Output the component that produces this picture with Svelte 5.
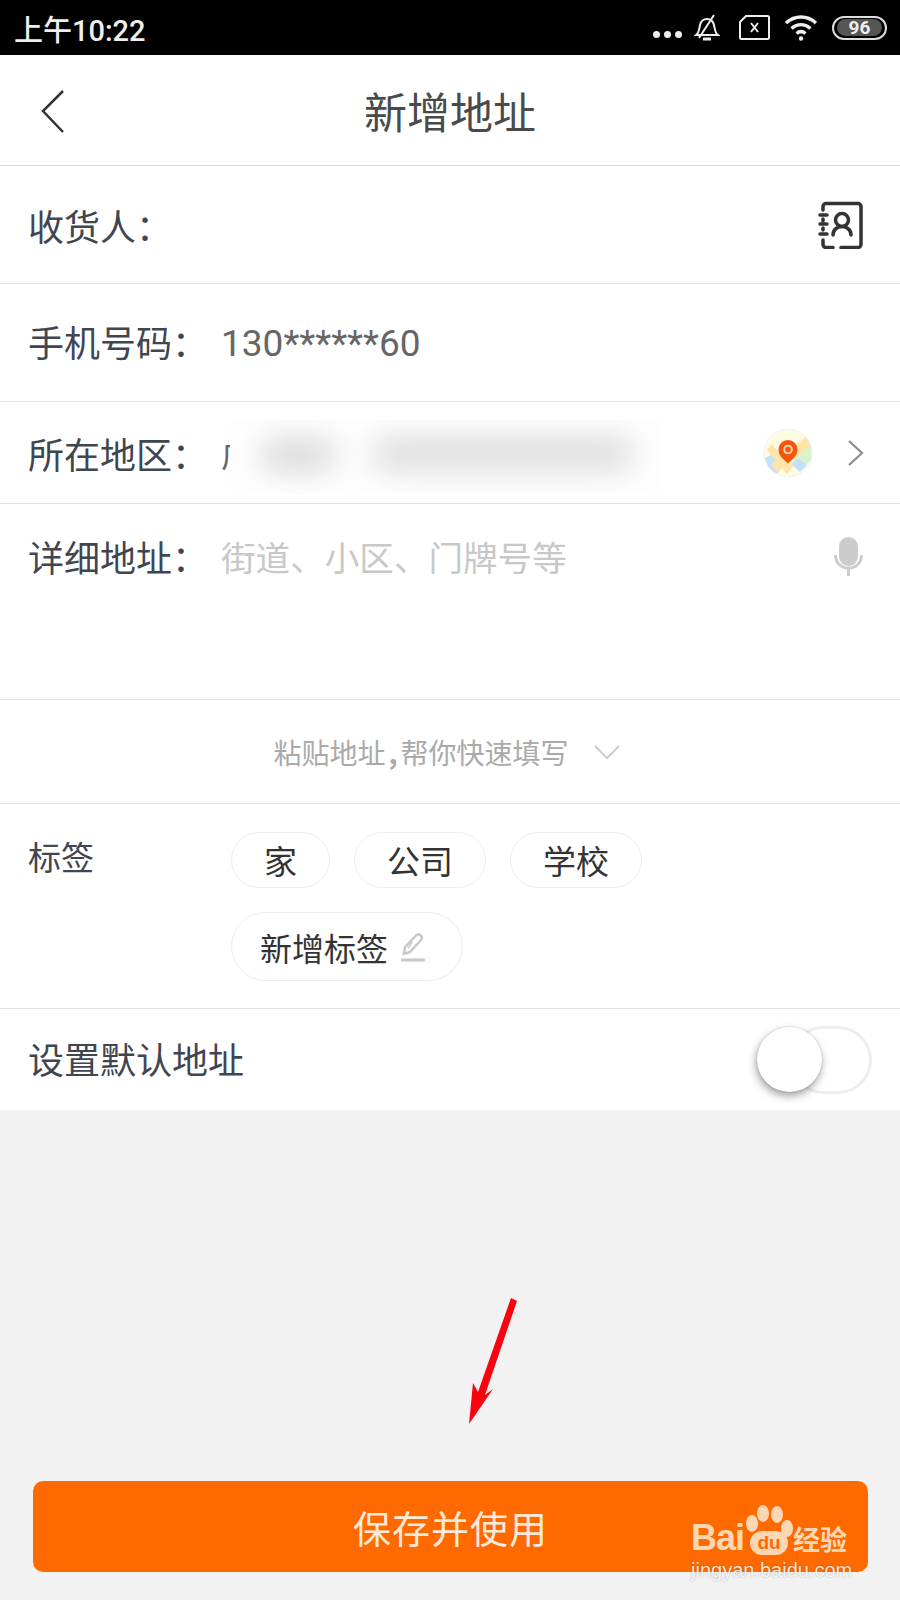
<script>
  let tags = ["家", "公司", "学校"];
</script>

<div class="page">
  <div class="status">
    <span class="time">上午10:22</span>
    <div class="status-icons">
      <span class="dots"><i></i><i></i><i></i></span>
      <svg width="26" height="28" viewBox="0 0 26 28" fill="none" stroke="#eee" stroke-width="2">
        <path d="M2 21c3-2 3-5 4-10 1-4 3-6 7-6s6 2 7 6c1 5 1 8 4 10z" />
        <path d="M9 25h8" stroke-width="3" />
        <path d="M5 24L20 1" />
      </svg>
      <svg class="sim" width="31" height="25" viewBox="0 0 31 25" fill="none" stroke="#eee" stroke-width="2">
        <path d="M7 1h21.500a1.500 1.500 0 0 1 1.500 1.500v20a1.500 1.500 0 0 1-1.500 1.500H2.500a1.500 1.500 0 0 1-1.500-1.500V7z" />
        <path d="M12 8l7 9M19 8l-7 9" />
      </svg>
      <svg width="34" height="26" viewBox="0 0 34 26" fill="none" stroke="#eee" stroke-width="3.500">
        <path d="M2 8c9-8 21-8 30 0" />
        <path d="M7.500 13.500c6-5 13-5 19 0" />
        <path d="M12.500 18.500c3-2.500 6-2.500 9 0" />
        <circle cx="17" cy="23.500" r="2.200" fill="#eee" stroke="none" />
      </svg>
      <span class="battery"><b>96</b></span>
    </div>
  </div>

  <header class="topbar">
    <svg class="back" width="26" height="44" viewBox="0 0 26 44" fill="none" stroke="#333" stroke-width="2.500">
      <path d="M23 2L3 22l20 21" />
    </svg>
    <h1>新增地址</h1>
  </header>

  <div class="row row-name">
    <span class="label">收货人：</span>
    <svg class="book" width="46" height="48" viewBox="0 0 46 48" fill="none" stroke="#333" stroke-width="3.500" stroke-linecap="round" stroke-linejoin="round">
      <path d="M5 9V5.500a3 3 0 0 1 3-3h32a3 3 0 0 1 3 3v38a3 3 0 0 1-3 3H23" />
      <path d="M15 46.500H8a3 3 0 0 1-3-3V39" />
      <path d="M5 18v2M5 27v2" />
      <path d="M2 14h7M2 23h7M2 33h7" />
      <circle cx="24" cy="19" r="6.500" />
      <path d="M15 34c0-5 4-8.500 9-8.500s9 3.500 9 8.500" />
    </svg>
  </div>

  <div class="row row-phone">
    <span class="label up">手机号码：</span>
    <span class="phone">130******60</span>
  </div>

  <div class="row row-area">
    <span class="label">所在地区：</span>
    <span class="area-text">广</span>
    <div class="blur"><span class="blob b1"></span><span class="blob b2"></span></div>
    <div class="right">
      <svg class="map" width="50" height="50" viewBox="0 0 50 50">
        <defs><clipPath id="mapclip"><circle cx="25" cy="25" r="24" /></clipPath></defs>
        <g clip-path="url(#mapclip)">
          <rect width="50" height="50" fill="#fefbe4" />
          <path d="M30 28L50 12v20L38 40z" fill="#d8f3cd" />
          <path d="M0 0h14L0 16z" fill="#e4f5da" />
          <path d="M0 31l12-6 10 10-11 15H0z" fill="#c4e0f6" />
          <path d="M28 36l7-6 9 7-7 7z" fill="#c4e0f6" />
          <path d="M4 22L8 16 30 38l-6 8zM8 36l36-28 6 8-36 28z" fill="#fde4a9" />
        </g>
        <circle cx="25" cy="25" r="24" fill="none" stroke="#f4f4ea" stroke-width="1" />
        <path d="M25 35.500c-3-3-9.500-7-9.500-14a9.500 9.500 0 0 1 19 0c0 7-6.500 11-9.500 14z" fill="#f4570c" />
        <circle cx="25" cy="21.500" r="3.800" fill="none" stroke="#fbd0b0" stroke-width="2" />
      </svg>
      <svg class="chev" width="18" height="28" viewBox="0 0 18 28" fill="none" stroke="#8c8c8c" stroke-width="2.200">
        <path d="M2 2l13 12L2 26" />
      </svg>
    </div>
  </div>

  <div class="row row-detail">
    <span class="label">详细地址：</span>
    <span class="placeholder">街道、小区、门牌号等</span>
    <svg class="mic" width="29" height="39" viewBox="0 0 29 39" fill="#ccc">
      <rect x="5" y="0" width="19" height="29" rx="9.500" />
      <path d="M1.500 18c0 8 5.500 13 13 13s13-5 13-13" fill="none" stroke="#ccc" stroke-width="3" />
      <rect x="13" y="31" width="3" height="8" />
    </svg>
  </div>

  <div class="row row-paste">
    <span class="paste-text">粘贴地址<span class="comma">,</span>帮你快速填写</span>
    <svg width="28" height="16" viewBox="0 0 28 16" fill="none" stroke="#ccc" stroke-width="2">
      <path d="M2 2l12 12L26 2" />
    </svg>
  </div>

  <div class="row row-tags">
    <span class="label tag-label">标签</span>
    <div class="tags">
      {#each tags as tag}
        <span class="pill">{tag}</span>
      {/each}
      <span class="pill pill-new">
        新增标签
        <svg width="26" height="30" viewBox="0 0 26 30" fill="none" stroke="#c8c8c8" stroke-width="2.500">
          <path d="M4 22l1-7L16 3.500c3-3 7.500 1 5 4.500L10 20z" />
          <path d="M12 10l-4 6" stroke-width="1.500" />
          <path d="M1 28h24" stroke-width="3" />
        </svg>
      </span>
    </div>
  </div>

  <div class="row row-default">
    <span class="label up">设置默认地址</span>
    <div class="toggle"><span class="knob"></span></div>
  </div>

  <div class="grey">
    <svg class="arrow" width="60" height="130" viewBox="0 0 60 130">
      <path d="M49 2L55 5 23 99 31 93 7 128 11 87 16 96z" fill="#fb0210" />
    </svg>
    <button class="save">保存并使用</button>
    <div class="mark">
      <div class="mark-top">
        <span class="bai">Bai</span>
        <span class="paw">
          <i class="toe t1"></i><i class="toe t2"></i><i class="toe t3"></i><i class="toe t4"></i>
          <i class="pad">du</i>
        </span>
        <span class="jy">经验</span>
      </div>
      <div class="url">jingyan.baidu.com</div>
    </div>
  </div>
</div>

<style>
  :global(body) {
    margin: 0;
    background: #f2f2f2;
  }

  .page {
    width: 900px;
    height: 1600px;
    display: flex;
    flex-direction: column;
    overflow: hidden;
    font-family: "Noto Sans CJK SC", "Noto Sans", sans-serif;
    color: #3c3c3c;
  }

  .status {
    height: 55px;
    background: #000;
    display: flex;
    align-items: center;
    justify-content: space-between;
    padding: 0 13px 0 14px;
    flex-shrink: 0;
  }

  .time {
    font-family: Roboto, "Noto Sans CJK SC", sans-serif;
    font-size: 29px;
    font-weight: 500;
    color: #eee;
  }

  .status-icons {
    display: flex;
    align-items: center;
  }

  .dots {
    display: flex;
    gap: 4px;
    margin-top: 14px;
    margin-right: 12px;
  }

  .dots i {
    width: 7px;
    height: 7px;
    border-radius: 50%;
    background: #eee;
  }

  .sim {
    margin-left: 19px;
    margin-right: 14px;
  }

  .battery {
    width: 51px;
    height: 20px;
    margin-left: 14px;
    border: 2px solid #ddd;
    border-radius: 12px;
    display: flex;
    align-items: center;
    justify-content: center;
  }

  .battery b {
    width: 45px;
    height: 17px;
    line-height: 17px;
    border-radius: 9px;
    background: #555;
    color: #eee;
    font-family: Roboto, sans-serif;
    font-size: 19px;
    font-weight: 700;
    text-align: center;
  }

  .topbar {
    height: 110px;
    background: #fff;
    border-bottom: 1px solid #dedede;
    display: flex;
    align-items: center;
    justify-content: center;
    position: relative;
    flex-shrink: 0;
  }

  .back {
    position: absolute;
    left: 40px;
    top: 34px;
  }

  h1 {
    margin: 0;
    font-size: 43px;
    font-weight: 400;
    color: #4a4a4a;
  }

  .row {
    background: #fff;
    border-bottom: 1px solid #e2e2e2;
    display: flex;
    align-items: center;
    padding: 0 29px 0 28px;
    flex-shrink: 0;
    box-sizing: border-box;
    position: relative;
  }

  .label {
    font-size: 36px;
    color: #3f4650;
    width: 193px;
    flex-shrink: 0;
  }

  .label.up {
    margin-bottom: 4px;
  }

  .row-name {
    height: 118px;
    justify-content: space-between;
    padding-right: 36px;
  }

  .row-phone {
    height: 118px;
  }

  .phone {
    font-family: Roboto, sans-serif;
    font-size: 37px;
    color: #666;
    margin-top: 2px;
  }

  .row-area {
    height: 102px;
  }

  .area-text {
    font-size: 32px;
    color: #666;
  }

  .blur {
    position: absolute;
    left: 230px;
    top: 18px;
    width: 430px;
    height: 74px;
    background: #fefefe;
    overflow: hidden;
  }

  .blob {
    position: absolute;
    background: #d8d8d8;
    border-radius: 16px;
    filter: blur(15px);
  }

  .b1 {
    left: 30px;
    top: 19px;
    width: 76px;
    height: 32px;
  }

  .b2 {
    left: 142px;
    top: 17px;
    width: 262px;
    height: 34px;
    background: #dcdcdc;
  }

  .right {
    margin-left: auto;
    display: flex;
    align-items: center;
    gap: 34px;
    margin-right: 6px;
  }

  .row-detail {
    height: 196px;
    align-items: flex-start;
    padding-top: 30px;
  }

  .placeholder {
    font-size: 34.600px;
    color: #c8c8c8;
    line-height: 44px;
  }

  .row-detail .label {
    line-height: 44px;
  }

  .mic {
    margin-left: auto;
    margin-right: 8px;
    margin-top: 3px;
  }

  .row-paste {
    height: 104px;
    justify-content: center;
    gap: 24px;
    font-size: 28px;
    color: #aaa;
    padding-right: 34px;
  }

  .comma {
    display: inline-block;
    width: 15px;
    font-weight: 700;
    text-align: center;
  }

  .row-tags {
    height: 205px;
    align-items: flex-start;
  }

  .tag-label {
    margin-top: 28px;
    font-size: 33px;
  }

  .tags {
    width: 440px;
    margin-left: 10px;
    margin-top: 28px;
    display: flex;
    flex-wrap: wrap;
    gap: 24px;
  }

  .pill {
    height: 56px;
    padding: 0 32px;
    border: 1px solid #ececec;
    border-radius: 29px;
    box-sizing: border-box;
    display: flex;
    align-items: center;
    font-size: 33px;
    color: #333;
    white-space: nowrap;
  }

  .pill-new {
    height: 69px;
    border-radius: 35px;
    padding: 0 34px 0 28px;
    gap: 12px;
    width: 232px;
    font-size: 32px;
  }

  .row-default {
    height: 101px;
    border-bottom: 0;
    justify-content: space-between;
    padding-right: 28px;
  }

  .row-default .label {
    width: auto;
  }

  .toggle {
    width: 82px;
    height: 68px;
    box-sizing: border-box;
    border: 3px solid #eeeeee;
    border-radius: 34px;
    position: relative;
  }

  .knob {
    position: absolute;
    left: -36px;
    top: -2px;
    width: 65px;
    height: 65px;
    border-radius: 50%;
    background: #fff;
    box-shadow: -1px 4px 8px rgba(0, 0, 0, 0.38), 0 0 2px rgba(0, 0, 0, 0.2);
  }

  .grey {
    flex: 1;
    background: #f2f2f2;
    position: relative;
    display: flex;
    flex-direction: column;
    justify-content: flex-end;
    padding: 0 32px 28px 33px;
  }

  .arrow {
    position: absolute;
    left: 462px;
    top: 186px;
  }

  .save {
    height: 91px;
    border: 0;
    border-radius: 10px;
    background: #ff6a00;
    color: #fde9d9;
    font-family: inherit;
    font-size: 38px;
    letter-spacing: 1px;
  }

  .mark {
    position: absolute;
    left: 691px;
    top: 395px;
    width: 170px;
    color: #fdd6b4;
  }

  .mark-top {
    display: flex;
    align-items: flex-end;
    height: 50px;
  }

  .bai {
    font-family: "Liberation Sans", sans-serif;
    font-size: 36px;
    font-weight: 700;
    line-height: 34px;
    width: 59px;
    letter-spacing: -1px;
  }

  .paw {
    position: relative;
    width: 40px;
    height: 50px;
    flex-shrink: 0;
  }

  .toe {
    position: absolute;
    width: 12px;
    height: 17px;
    background: #fdd6b4;
    border-radius: 50%;
  }

  .t1 { left: -4px; top: 10px; }
  .t2 { left: 7px; top: 0; }
  .t3 { left: 21px; top: 1px; }
  .t4 { left: 31px; top: 15px; }

  .pad {
    position: absolute;
    left: 0;
    bottom: 0;
    width: 38px;
    height: 24px;
    border-radius: 13px;
    background: #fdd6b4;
    color: #ff6a00;
    font: 700 19px/24px "Liberation Sans", sans-serif;
    text-align: center;
  }

  .jy {
    font-size: 27px;
    font-weight: 700;
    line-height: 32px;
    margin-left: 3px;
    white-space: nowrap;
  }

  .url {
    font-family: "Liberation Sans", sans-serif;
    font-size: 20px;
    margin-top: 2px;
    color: rgba(255, 255, 255, 0.85);
    text-shadow: 0 0 2px rgba(0, 0, 0, 0.3);
    white-space: nowrap;
    line-height: 26px;
  }
</style>
